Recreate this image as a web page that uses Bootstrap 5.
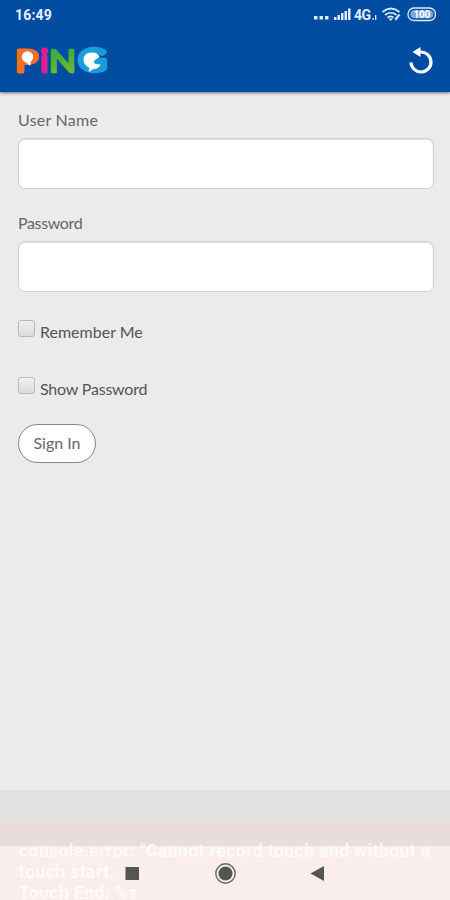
<!DOCTYPE html>
<html lang="en">
<head>
<meta charset="utf-8">
<meta name="viewport" content="width=device-width, initial-scale=1">
<title>PiNG Sign In</title>
<link href="https://cdn.jsdelivr.net/npm/bootstrap@5.3.0/dist/css/bootstrap.min.css" rel="stylesheet">
<style>
body{background:#ebebeb;font-family:Lato,sans-serif;color:#666;font-size:16px;line-height:20px;height:900px;overflow:hidden}
.topbar{background:#024da1;height:92px;box-shadow:0 1px 3px rgba(0,0,0,.55)}
.status{height:30px;padding:0 14px 0 15px;font:700 14px/30px Roboto,sans-serif;letter-spacing:.2px;color:#e9f2ff}
.brandrow{height:62px;padding:0 16px 0 15px}
.signin{padding:18px 16px 0 18px}
.signin label{display:block;white-space:nowrap}
.field{height:51px;border:1px solid #d0d0d0;border-radius:7px;background:#fff;box-shadow:inset 0 1px 1px #ddd}
.f1{margin:8px 0 24px}.f2{margin:8px 0 28px}
.tick{appearance:none;width:17px;height:17px;border:1px solid #b9b9b9;border-radius:3px;background:linear-gradient(#f0f0f0,#dcdcdc);margin:0 5px 0 0;flex:none}
.check-line{height:22px}
.check-line label{padding-top:2px;color:#555}
.gap-line{margin-bottom:35px}
.go{width:78px;height:39px;border:1px solid #858585;border-radius:20px;background:#fff;color:#666;font-size:16px;margin-top:25px;padding:0 0 2px}
.t1{letter-spacing:.25px}.t2{letter-spacing:-.35px}.t3{letter-spacing:0}.t4{letter-spacing:-.2px}
.tray{height:110px}
.band1{height:29px;background:#e2e2e1}
.band2{height:27px;background:#e8dcdc}
.band3{height:54px;background:#faeeed}
.log{left:19px;top:51px;font:700 17.5px/21px Roboto,sans-serif;letter-spacing:.44px;color:rgba(255,255,255,.75);white-space:nowrap}
.keys{left:0;top:56px}
</style>
<script src="https://cdn.jsdelivr.net/npm/bootstrap@5.3.0/dist/js/bootstrap.bundle.min.js"></script>
</head>
<body class="d-flex flex-column">
<header class="topbar flex-shrink-0">
  <div class="status d-flex justify-content-between">
    <span>16:49</span>
    <svg width="124" height="30" viewBox="312 0 124 30" fill="#dfebfc">
      <path d="M314 16h3.500v3.500H314zM319.500 16h3.500v3.500h-3.500zM325 16h3.500v3.500H325z"/>
      <path d="M334 17h2.500v3H334zM337.500 15h2.500v5h-2.500zM341 13h2.500v7H341zM344.500 11h2.500v9h-2.500zM348 8.500h2.500V20H348z"/>
      <text x="354" y="19.500" font-family="Roboto" font-size="14" font-weight="700" letter-spacing="-.5">4G</text>
      <path d="M372.500 18h1.300v2h-1.300zM375 15h1.300v5H375z"/>
      <g fill="none" stroke="#dfebfc" stroke-width="1.700"><path d="M382.500 12q8.500-7 17 0M385 15q6-4.500 11.500 0M387.500 17.700q3.500-2.500 6 0"/></g>
      <path d="M388.500 18.500h4.500l-2.200 2.500zM394.500 19l4-5 2 1-4.500 5.500z"/>
      <rect x="408" y="8" width="27.500" height="12.500" rx="6" fill="none" stroke="#dfebfc" stroke-width="1.300"/>
      <rect x="410.300" y="10.300" width="23" height="8" rx="4" fill="#7fa8d8"/>
      <text x="413.500" y="18" font-family="Roboto" font-size="10" font-weight="700" fill="#fff" letter-spacing="-.2">100</text>
    </svg>
  </div>
  <div class="brandrow d-flex align-items-center justify-content-between">
    <svg width="94" height="42" viewBox="0 -4 94 42" role="img" aria-label="PiNG logo" font-family="Lato" font-weight="400" font-size="31" stroke-linejoin="round" stroke-linecap="round">
      <defs><linearGradient id="leaf" x2="0" y2="1"><stop stop-color="#28a34b"/><stop offset="1" stop-color="#77bf26"/></linearGradient></defs>
      <text x="0" y="27.500" fill="#f36f21" stroke="#f36f21" stroke-width="3" textLength="23" lengthAdjust="spacingAndGlyphs">P</text>
      <text x="25.200" y="27.500" fill="#e51b91" stroke="#e51b91" stroke-width="3" textLength="7.500" lengthAdjust="spacingAndGlyphs">i</text>
      <text x="34" y="27.500" fill="url(#leaf)" stroke="url(#leaf)" stroke-width="2.500" textLength="27" lengthAdjust="spacingAndGlyphs">N</text>
      <text x="63.500" y="27" fill="#199ed9" stroke="#199ed9" stroke-width="4.500" textLength="28" lengthAdjust="spacingAndGlyphs">G</text>
      <circle cx="12.500" cy="13" r="5.700" fill="#fff"/><path d="M10 17h6l-1 5z" fill="#fff"/>
      <path d="M77 8.500c4 0 7 2 7.500 4.500l-4 2.500-2 2.500 2 2 5 .5c-1 3-4 4.500-7 4.500l-5 3 1-4c-4-2-6-5-6-8 0-4.500 3-7.500 8.500-7.500z" fill="#fff"/>
    </svg>
    <svg width="26" height="28" viewBox="0 0 26 28"><path d="M3 15.500A10 10 0 1 0 12.500 5H10" fill="none" stroke="#fff" stroke-width="3.200"/><path d="M4.500 5l8-5v10z" fill="#fff"/></svg>
  </div>
</header>
<main class="signin flex-grow-1">
  <label class="t1" for="user">User Name</label>
  <input id="user" class="field d-block w-100 f1">
  <label class="t2" for="pass">Password</label>
  <input id="pass" type="password" class="field d-block w-100 f2">
  <div class="check-line gap-line d-flex"><input id="remember" class="tick" type="checkbox"><label class="t3" for="remember">Remember Me</label></div>
  <div class="check-line d-flex"><input id="show" class="tick" type="checkbox"><label class="t4" for="show">Show Password</label></div>
  <button class="go" type="button">Sign In</button>
</main>
<footer class="tray position-relative flex-shrink-0">
  <div class="band1"></div><div class="band2"></div><div class="band3"></div>
  <div class="log position-absolute">console.error: "Cannot record touch and without a<br>touch start.<br>Touch End: %s</div>
  <svg class="keys position-absolute" width="450" height="54" fill="#555"><path d="M125.500 21h13.500v13h-13.500z"/><circle cx="225.500" cy="27.500" r="9.700" fill="#faeeed" stroke="#666" stroke-width="1.400"/><circle cx="225.500" cy="27.500" r="7"/><path d="M310.500 27.500L324 20v15z"/></svg>
</footer>
</body>
</html>
